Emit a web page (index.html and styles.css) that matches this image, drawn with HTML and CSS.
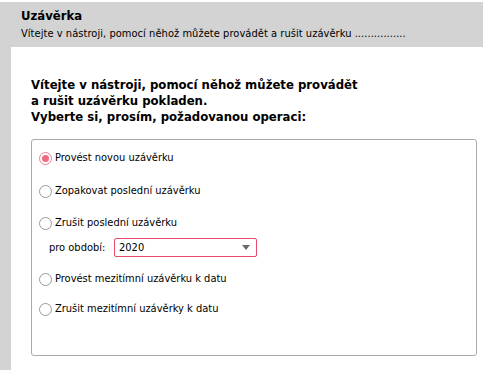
FILE: index.html
```html
<!DOCTYPE html>
<html lang="cs">
<head>
<meta charset="utf-8">
<title>Uzávěrka</title>
<link rel="stylesheet" href="styles.css">
</head>
<body>
<div class="page">
  <header class="head">
    <div class="title">Uzávěrka</div>
    <div class="subtitle">Vítejte v nástroji, pomocí něhož můžete provádět a rušit uzávěrku ................</div>
  </header>
  <div class="body">
    <main class="content">
      <h1 class="intro">Vítejte v nástroji, pomocí něhož můžete provádět<br>a rušit uzávěrku pokladen.<br>Vyberte si, prosím, požadovanou operaci:</h1>
      <div class="box">
        <label class="opt opt-1"><span class="radio checked"></span>Provést novou uzávěrku</label>
        <label class="opt opt-2"><span class="radio"></span>Zopakovat poslední uzávěrku</label>
        <label class="opt opt-3"><span class="radio"></span>Zrušit poslední uzávěrku</label>
        <div class="period">
          <span class="period-label">pro období:</span>
          <div class="select"><span>2020</span><span class="arrow"></span></div>
        </div>
        <label class="opt opt-4"><span class="radio"></span>Provést mezitímní uzávěrku k datu</label>
        <label class="opt opt-5"><span class="radio"></span>Zrušit mezitímní uzávěrky k datu</label>
      </div>
    </main>
  </div>
</div>
</body>
</html>
```
FILE: styles.css
```css
html, body {
  margin: 0;
  padding: 0;
  background: #fff;
}
body {
  font-family: "DejaVu Sans Condensed", "Liberation Sans", sans-serif;
  font-size: 11px;
  color: #000;
}
.page {
  width: 484px;
  height: 370px;
  padding-top: 2px;
  box-sizing: border-box;
  display: flex;
  flex-direction: column;
}
.head {
  background: #d3d3d3;
  height: 45px;
  margin-right: 1px;
  box-sizing: border-box;
  padding: 6px 0 0 21px;
}
.title {
  font-size: 13px;
  font-weight: bold;
  line-height: 16px;
}
.subtitle {
  font-size: 11px;
  line-height: 14px;
  margin-top: 3px;
  letter-spacing: 0.05px;
}
.body {
  flex: 1;
  border-left: 11px solid #d3d3d3;
  display: flex;
}
.content {
  flex: 1;
  padding: 30px 7px 0 20px;
}
.intro {
  margin: 0;
  font-size: 13px;
  font-weight: bold;
  line-height: 16px;
}
.box {
  margin-top: 14px;
  height: 217px;
  box-sizing: border-box;
  border: 1px solid #ababab;
  border-radius: 3px;
  padding: 10px 0 0 7px;
  display: flex;
  flex-direction: column;
}
.opt {
  display: flex;
  align-items: center;
  height: 16px;
  line-height: 16px;
}
.opt-2 { margin-top: 17px; }
.opt-3 { margin-top: 16px; }
.opt-4 { margin-top: 14px; }
.opt-5 { margin-top: 14px; }
.radio {
  width: 13px;
  height: 13px;
  box-sizing: border-box;
  border: 1px solid #9a9a9a;
  border-radius: 50%;
  background: #fff;
  margin-right: 3px;
  display: flex;
  align-items: center;
  justify-content: center;
}
.radio.checked {
  border-color: #ee7d93;
}
.radio.checked::after {
  content: "";
  width: 7px;
  height: 7px;
  border-radius: 50%;
  background: #ef6a86;
}
.period {
  display: flex;
  align-items: center;
  margin-top: 7px;
  padding-left: 10px;
}
.period-label {
  width: 65px;
}
.select {
  width: 143px;
  height: 19px;
  box-sizing: border-box;
  border: 1px solid #e84a6c;
  border-radius: 2px;
  display: flex;
  align-items: center;
  justify-content: space-between;
  padding: 0 6px 0 4px;
}
.arrow {
  width: 0;
  height: 0;
  border-left: 4px solid transparent;
  border-right: 4px solid transparent;
  border-top: 5px solid #6b6b6b;
}
```
